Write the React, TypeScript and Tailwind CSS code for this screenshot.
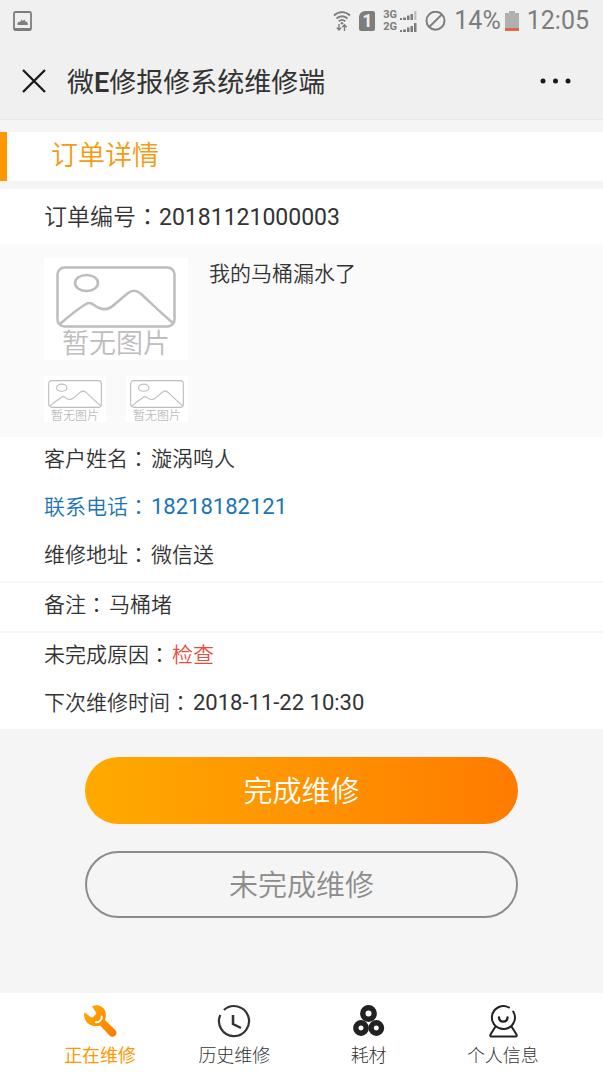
import type { ReactNode } from 'react'

const Colon = () => (
  <span className="font-['Noto_Sans_CJK_JP',sans-serif]">：</span>
)

const StatusBar = () => (
  <div className="flex h-[42px] items-center justify-between pl-[13px] pr-3.5 text-[#7d7d7d]">
    <svg width="19" height="20" viewBox="0 0 19 20" aria-hidden="true">
      <rect x="1" y="1" width="17" height="18" rx="1.5" fill="none" stroke="currentColor" strokeWidth="1.8" />
      <path d="M1 17h17v2.500H1z" fill="currentColor" />
      <path d="M4.500 14v-2l1.500-1.500 1 .8L8.500 8.500l1.300 1.500L11.300 8.500l1.500 2.500 1-.6 1 2V14z" fill="currentColor" />
    </svg>
    <div className="flex items-center">
      <svg width="18" height="22" viewBox="0 0 18 22" fill="none" stroke="currentColor" aria-hidden="true">
        <path d="M1 5.500C5.500 1 12.500 1 17 5.500" strokeWidth="1.800" />
        <path d="M3.500 8.500c3-3 8-3 11 0" strokeWidth="1.800" />
        <path d="M5.800 11.300c2-1.700 4.400-1.700 6.400 0" strokeWidth="1.800" />
        <circle cx="9" cy="13.200" r="1.300" fill="currentColor" stroke="none" />
        <path d="M6 14v6M3.800 17.600L6 20l2.200-2.400M11.500 21v-6M9.300 17.300l2.200-2.400 2.200 2.400" strokeWidth="1.400" />
      </svg>
      <div className="ml-2 flex h-5 w-4 items-center justify-center rounded-xs rounded-tl-md bg-[#7d7d7d] text-lg font-bold text-[#f0f0f0]">
        1
      </div>
      <div className="ml-2 flex flex-col text-[11px] leading-3 font-bold">
        <div className="flex items-center gap-px">
          <span className="w-4">3G</span>
          <svg width="17" height="9" viewBox="0 0 17 9" fill="currentColor" aria-hidden="true">
            <path d="M0 7h2v2H0zM3 6.500h3V9H3zM7 4.500h2.500V9H7zM10.500 3H13v6h-2.500z" />
            <path d="M14 0h2.500v9H14z" opacity=".4" />
          </svg>
        </div>
        <div className="flex items-center gap-px">
          <span className="w-4">2G</span>
          <svg width="17" height="9" viewBox="0 0 17 9" fill="currentColor" aria-hidden="true">
            <path d="M0 7h2v2H0zM3 6.500h3V9H3zM7 4.500h2.500V9H7zM10.500 3H13v6h-2.500zM14 0h2.500v9H14z" />
          </svg>
        </div>
      </div>
      <svg className="ml-2" width="21" height="21" viewBox="0 0 21 21" fill="none" stroke="currentColor" strokeWidth="2" aria-hidden="true">
        <circle cx="10.500" cy="9.700" r="9" />
        <path d="M4.200 16L17 3.400" />
      </svg>
      <span className="ml-2 text-[25px] leading-8">14%</span>
      <svg className="ml-1" width="14" height="20" viewBox="0 0 14 20" aria-hidden="true">
        <path d="M0 2h4V0h6v2h4v15H0z" fill="#b0b0b0" />
        <path d="M0 17h14v3H0z" fill="#e2664a" />
      </svg>
      <span className="ml-2 text-[25px] leading-8">12:05</span>
    </div>
  </div>
)

const Header = () => (
  <header className="flex h-[77px] items-center pl-[22px] pr-8 text-[#333]">
    <button type="button" aria-label="关闭">
      <svg width="24" height="24" viewBox="0 0 24 24" stroke="#1a1a1a" strokeWidth="2.300" aria-hidden="true">
        <path d="M1 1l22 22M23 1L1 23" />
      </svg>
    </button>
    <h1 className="ml-[21px] flex-1 pt-1 text-[27px] leading-8">
      微<span className="font-semibold">E</span>修报修系统维修端
    </h1>
    <button type="button" aria-label="更多">
      <svg width="31" height="6" viewBox="0 0 31 6" fill="#1a1a1a" aria-hidden="true">
        <circle cx="3" cy="3" r="2.500" />
        <circle cx="15.500" cy="3" r="2.500" />
        <circle cx="28" cy="3" r="2.500" />
      </svg>
    </button>
  </header>
)

const NoImage = ({ small }: { small?: boolean }) => (
  <div className={small ? 'flex h-[46px] w-[62px] flex-col items-center bg-white pt-1' : 'flex h-[102px] w-36 flex-col items-center bg-white pt-2'}>
    <svg className={small ? 'h-7 w-[54px] shrink-0' : 'h-[62px] w-[120px] shrink-0'} viewBox="0 0 120 62" preserveAspectRatio="none" fill="none" stroke="#bdbdbd" aria-hidden="true">
      <rect x="1.500" y="1.500" width="117" height="59" rx="7" strokeWidth="2.500" />
      <ellipse cx="30.500" cy="17" rx="11.500" ry="8" strokeWidth="2.500" />
      <path d="M4 58C13 50 22 43 30 38q4-2.500 8 1c9 7 16 4 21-1L72 27q6-4.500 12 0C94 36 106 48 117 57" strokeWidth="2.500" />
    </svg>
    <span className={small ? 'text-xs leading-4 text-[#bdbdbd] font-[350]' : 'text-[27px] leading-8 text-[#bdbdbd] font-[350]'}>暂无图片</span>
  </div>
)

const Row = ({ label, children }: { label: string; children: ReactNode }) => (
  <div className="flex h-12 items-baseline gap-0.5 pt-1 leading-8">
    <dt>{label}<Colon /></dt>
    <dd>{children}</dd>
  </div>
)

const Order = () => (
  <main className="text-[#333]">
    <h2 className="mt-3 flex h-[49px] items-center border-l-[7px] border-[#ff9800] bg-white pl-11 text-[27px] font-[350] text-[#f39c12]">
      订单详情
    </h2>
    <p className="mt-2 flex h-[55px] items-center bg-white px-11 text-[23px] font-[350]">
      <span>订单编号<Colon /><span className="font-normal">20181121000003</span></span>
    </p>
    <section className="flex h-[193px] gap-[21px] bg-[#fafafa] px-11 pt-3.5">
      <div>
        <NoImage />
        <div className="mt-4 flex gap-5">
          <NoImage small />
          <NoImage small />
        </div>
      </div>
      <p className="text-[21px] leading-8 font-[350]">我的马桶漏水了</p>
    </section>
    <dl className="bg-white text-[21px] font-[350]">
      <div className="px-11">
        <Row label="客户姓名">漩涡鸣人</Row>
        <div className="flex h-12 items-baseline gap-0.5 pt-1 leading-8 text-[#1a73b8]">
          <dt>联系电话<Colon /></dt>
          <dd><a href="tel:18218182121" className="text-[22px] font-normal">18218182121</a></dd>
        </div>
        <Row label="维修地址">微信送</Row>
      </div>
      <div className="border-y-2 border-[#f5f5f5] px-11">
        <Row label="备注">马桶堵</Row>
      </div>
      <div className="px-11">
        <Row label="未完成原因"><span className="text-[#e74c3c]">检查</span></Row>
        <Row label="下次维修时间"><span className="text-[22px] font-normal">2018-11-22 10:30</span></Row>
      </div>
    </dl>
  </main>
)

const WrenchIcon = () => (
  <svg width="34" height="34" viewBox="0 0 34 34" aria-hidden="true">
    <defs>
      <linearGradient id="wrench" x1="0" y1="0" x2="1" y2="1">
        <stop offset="0" stopColor="#ffab00" />
        <stop offset="1" stopColor="#ff7a00" />
      </linearGradient>
    </defs>
    <path d="M9 2.200C14.500-.2 20.500 2 22.300 7.500c1 3.200.7 6-.3 8.500l10 9.700c2 2 1.900 4.200.3 5.800-1.700 1.700-4.100 1.600-5.900-.3L17 21.500C10 23.500 2.300 20 1.200 12.500c-.2-1.800 0-3 .4-4.300L7.500 13c1 .6 2.100.5 2.900-.2l2.300-2.300c.7-.8.700-1.900-.1-2.700z" fill="url(#wrench)" />
    <path d="M18.800 12.500c.2 3.200-2.600 6-6 5.800" fill="none" stroke="#fff" strokeWidth="2" strokeLinecap="round" />
  </svg>
)

const ClockIcon = () => (
  <svg width="34" height="34" viewBox="0 0 34 34" fill="none" stroke="#333" strokeWidth="2.200" aria-hidden="true">
    <path d="M6.900 6A15 15 0 1 1 3.300 11" />
    <path d="M16 11v9l8 4" strokeWidth="2.500" />
  </svg>
)

const PartsIcon = () => (
  <svg width="34" height="34" viewBox="0 0 34 34" fill="none" stroke="#222" strokeWidth="5.400" aria-hidden="true">
    <circle cx="16.500" cy="9.500" r="5.700" />
    <circle cx="9" cy="24" r="5.200" />
    <circle cx="24.300" cy="24" r="5.200" />
  </svg>
)

const PersonIcon = () => (
  <svg width="34" height="34" viewBox="0 0 34 34" fill="none" stroke="#222" strokeWidth="2" strokeLinecap="round" aria-hidden="true">
    <path d="M27.200 7.500A11.500 11.500 0 1 1 23 3.500" />
    <path d="M13 13.500c.5 5.500 8 5.500 8.500 0" strokeWidth="2.400" />
    <path d="M9.500 22.500L4.500 30.500q-.8 2 1 2h24q1.800 0 1-2l-5-8" />
  </svg>
)

const tabs = [
  { name: '正在维修', icon: <WrenchIcon />, active: true },
  { name: '历史维修', icon: <ClockIcon />, active: false },
  { name: '耗材', icon: <PartsIcon />, active: false },
  { name: '个人信息', icon: <PersonIcon />, active: false },
]

const TabBar = () => (
  <nav className="mt-auto grid h-[79px] grid-cols-4 bg-white px-[33px] pt-[11px]">
    {tabs.map((tab) => (
      <a key={tab.name} href="#" className="flex flex-col items-center gap-1.5">
        {tab.icon}
        <span className={tab.active ? 'text-[18px] leading-6 text-[#f90]' : 'text-[18px] leading-6 font-light text-[#333]'}>
          {tab.name}
        </span>
      </a>
    ))}
  </nav>
)

const App = () => (
  <div className="flex min-h-screen flex-col bg-[#f5f5f5] font-[Roboto,'Noto_Sans_CJK_SC',sans-serif]">
    <div className="border-b border-[#e8e8e8] bg-[#f0f0f0]">
      <StatusBar />
      <Header />
    </div>
    <Order />
    <div className="flex flex-col gap-[27px] px-[85px] pt-7 pb-8">
      <button type="button" className="h-[67px] rounded-full bg-linear-to-r from-[#ffaa00] to-[#ff7b00] pt-1 text-[29px] font-[350] text-white">
        完成维修
      </button>
      <button type="button" className="h-[67px] rounded-full border-2 border-[#8c8c8c] pt-1 text-[29px] font-[350] text-[#8c8c8c]">
        未完成维修
      </button>
    </div>
    <TabBar />
  </div>
)

export default App
